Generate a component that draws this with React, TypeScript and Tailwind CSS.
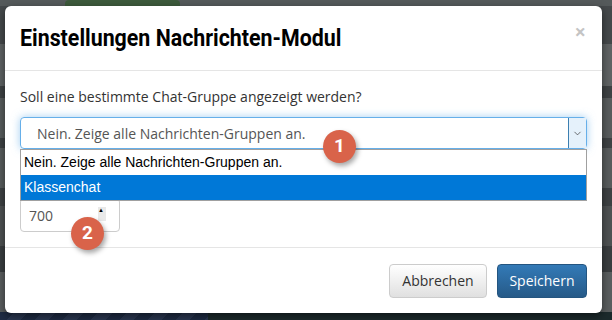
import { ChevronDown } from "lucide-react";

function Badge({ n }: { n: number }) {
  return (
    <span className="flex h-[33px] w-[33px] items-center justify-center rounded-full bg-[#d9634a] text-[19px] font-bold text-white shadow-[2px_3px_5px_rgba(0,0,0,0.35)] [font-family:'Roboto',sans-serif]">
      {n}
    </span>
  );
}

export default function App() {
  return (
    <div className="relative h-[320px] w-[612px] overflow-hidden bg-[#454a4c] [font-family:'Open_Sans',sans-serif]">
      {/* page behind the overlay */}
      <div className="flex h-full flex-col">
        <div className="flex h-[6px] items-start gap-2 bg-[#555a5b] pl-[65px]">
          <div className="h-[6px] w-[115px] rounded-t bg-[#3d5a3c]" />
        </div>
        <div className="h-[38px] bg-[#45494b]" />
        <div className="h-[42px] bg-[#5f6364]" />
        <div className="h-[12px] bg-[#3e4244]" />
        <div className="h-[40px] bg-[#585c5d]" />
        <div className="h-[10px] bg-[#3e4244]" />
        <div className="h-[40px] bg-[#585c5d]" />
        <div className="h-[18px] bg-[#3e4244]" />
        <div className="h-[40px] bg-[#4e5253]" />
        <div className="h-[26px] bg-[#3a3e40]" />
        <div className="h-[40px] bg-[#5a5e5f]" />
        <div className="flex flex-1">
          <div className="w-[208px] bg-[repeating-linear-gradient(135deg,#1f2c44_0px,#1f2c44_10px,#2b3852_10px,#2b3852_20px)]" />
          <div className="flex-1 bg-[#1c2a2c]" />
        </div>
      </div>

      {/* modal */}
      <div className="absolute left-[5px] top-[6px] flex h-[307px] w-[597px] flex-col rounded-[6px] bg-white shadow-[0_3px_9px_rgba(0,0,0,0.5)]">
        <div className="flex h-[65px] shrink-0 items-center justify-between border-b border-[#e5e5e5] pl-[15px] pr-[16px]">
          <h4 className="origin-left scale-x-[0.89] whitespace-nowrap text-[24px] font-bold leading-none text-black [font-family:'Roboto',sans-serif]">
            Einstellungen Nachrichten-Modul
          </h4>
          <span className="-mt-[12px] text-[20px] font-bold leading-none text-[#c4c4c4]">×</span>
        </div>

        <div className="relative shrink-0 px-[15px] pt-[16px]">
          <p className="text-[14px] leading-[20px] text-[#333]">
            Soll eine bestimmte Chat-Gruppe angezeigt werden?
          </p>
          <div className="relative mt-[10px]">
            <div className="flex h-[32px] items-center justify-between rounded-[4px] border border-[#66afe9] pl-[16px] shadow-[0_0_8px_rgba(102,175,233,0.6)]">
              <span className="text-[14px] text-[#555]">Nein. Zeige alle Nachrichten-Gruppen an.</span>
              <span className="flex h-full w-[18px] items-center justify-center border-l border-[#3c7fb1] bg-[#e5f1fb]">
                <ChevronDown size={11} strokeWidth={1.5} className="text-[#333]" />
              </span>
            </div>
            <ul className="absolute left-0 right-0 top-[32px] z-10 border border-[#a0a0a0] bg-white text-[14px] [font-family:'Liberation_Sans',Arial,sans-serif]">
              <li className="h-[25px] pl-[3px] leading-[25px] text-black">Nein. Zeige alle Nachrichten-Gruppen an.</li>
              <li className="h-[25px] bg-[#0078d7] pl-[3px] leading-[25px] text-white">Klassenchat</li>
            </ul>
            <div className="absolute left-[303px] top-[13px] z-20">
              <Badge n={1} />
            </div>
          </div>

          <div className="relative mt-[49px] flex h-[34px] w-[100px] items-center rounded-[4px] border border-[#ccc] pl-[8px]">
            <span className="text-[14px] text-[#555]">700</span>
            <span className="absolute left-[77px] top-[8px] flex h-[14px] w-[8px] flex-col bg-[#e9e9e9] text-[6px] leading-[7px] text-black">
              ▲
            </span>
            <div className="absolute left-[50px] top-[18px] z-20">
              <Badge n={2} />
            </div>
          </div>
        </div>

        <div className="mt-[15px] flex flex-1 items-center justify-end gap-[10px] border-t border-[#e5e5e5] px-[15px]">
          <button className="h-[34px] w-[98px] rounded-[4px] border border-[#ccc] bg-[linear-gradient(#fff,#e0e0e0)] text-[14px] text-[#333]">
            Abbrechen
          </button>
          <button className="h-[34px] w-[90px] rounded-[4px] border border-[#245580] bg-[linear-gradient(#337ab7,#265a88)] text-[14px] text-white">
            Speichern
          </button>
        </div>
      </div>
    </div>
  );
}
